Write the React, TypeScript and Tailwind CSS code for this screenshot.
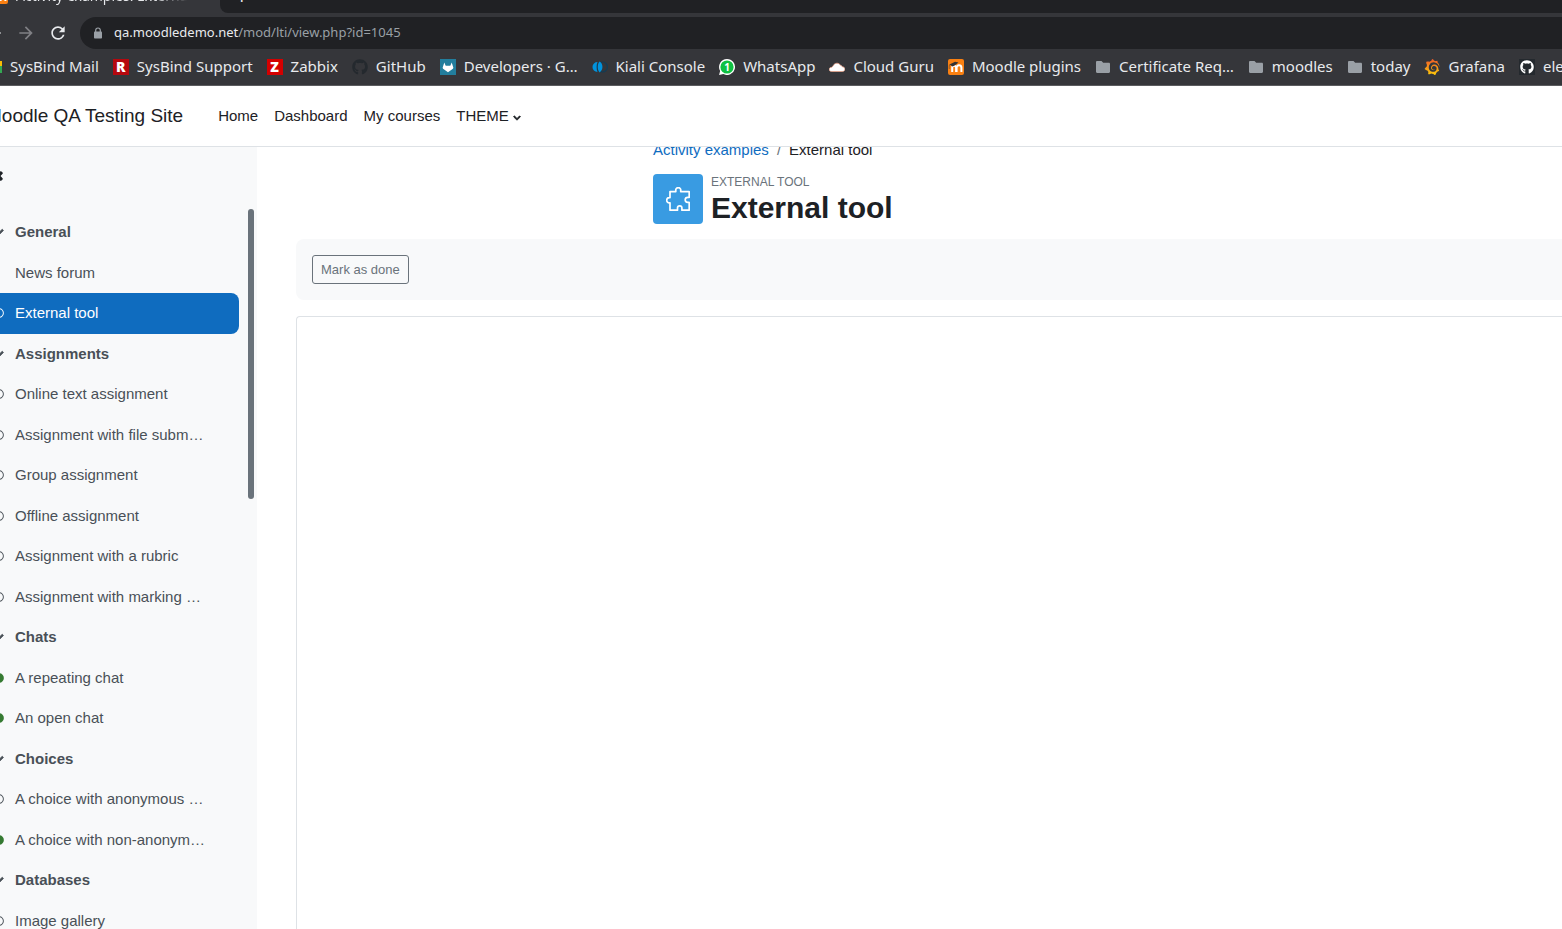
import type { ReactNode } from 'react'
import { FaChevronDown, FaCircle, FaGithub, FaRegCircle, FaTimes } from 'react-icons/fa'
import { MdArrowBack, MdArrowForward, MdRefresh } from 'react-icons/md'
import { SiGrafana } from 'react-icons/si'

type Status = 'none' | 'todo' | 'done'

interface Activity {
  name: string
  status: Status
  active?: boolean
}

interface Section {
  title: string
  items: Activity[]
}

const SECTIONS: Section[] = [
  {
    title: 'General',
    items: [
      { name: 'News forum', status: 'none' },
      { name: 'External tool', status: 'todo', active: true },
    ],
  },
  {
    title: 'Assignments',
    items: [
      { name: 'Online text assignment', status: 'todo' },
      { name: 'Assignment with file subm…', status: 'todo' },
      { name: 'Group assignment', status: 'todo' },
      { name: 'Offline assignment', status: 'todo' },
      { name: 'Assignment with a rubric', status: 'todo' },
      { name: 'Assignment with marking …', status: 'todo' },
    ],
  },
  {
    title: 'Chats',
    items: [
      { name: 'A repeating chat', status: 'done' },
      { name: 'An open chat', status: 'done' },
    ],
  },
  {
    title: 'Choices',
    items: [
      { name: 'A choice with anonymous …', status: 'todo' },
      { name: 'A choice with non-anonym…', status: 'done' },
    ],
  },
  {
    title: 'Databases',
    items: [{ name: 'Image gallery', status: 'todo' }],
  },
]

function MailIcon() {
  return (
    <svg viewBox="0 0 16 16" className="size-4">
      <path d="M0 2h16v12H0z" fill="#fff" />
      <path d="M0 2l8 6 8-6v3l-8 6-8-6z" fill="#ea4335" />
      <path d="M12 2h4v5h-4z" fill="#fbbc04" />
      <path d="M12 7h4v7h-4z" fill="#34a853" />
    </svg>
  )
}

function LetterIcon({ letter, className }: { letter: string; className: string }) {
  return (
    <span className={`flex size-4 items-center justify-center text-sm leading-4 font-black text-white ${className}`}>
      {letter}
    </span>
  )
}

function GitlabIcon() {
  return (
    <svg viewBox="0 0 16 16" className="size-4">
      <path d="M0 0h16v16H0z" fill="#227e9d" />
      <path d="M4.300 3.400L5.700 6.800h4.600l1.400-3.400 1.600 5.200c.1.4 0 .8-.4 1.100L8 13.200 3.100 9.700c-.4-.3-.5-.7-.4-1.100z" fill="#fff" />
    </svg>
  )
}

function KialiIcon() {
  return (
    <svg viewBox="0 0 16 16" className="size-4">
      <circle cx="10.400" cy="8" r="5" fill="none" stroke="#123c55" strokeWidth="1.200" />
      <path d="M5.500 3a5 5 0 1 0 0 10c-1.200-2.800-1.200-7.200 0-10z" fill="#0093dd" />
      <path d="M7.600 2.600c3.800 2.200 3.800 8.600 0 10.800-2.400-2.200-2.400-8.600 0-10.800z" fill="#0093dd" />
    </svg>
  )
}

function WhatsAppIcon() {
  return (
    <span className="relative flex size-4 items-center justify-center">
      <svg viewBox="0 0 16 16" className="absolute inset-0 size-4">
        <path d="M8 0a8 8 0 1 1-3.700 15.100L.1 16l1-4A8 8 0 0 1 8 0z" fill="#fff" />
        <circle cx="8" cy="8" r="6.600" fill="#0fc143" />
      </svg>
      <span className="relative text-[10px] leading-4 font-bold text-white">1</span>
    </span>
  )
}

function CloudIcon() {
  return (
    <svg viewBox="0 0 16 16" className="size-4">
      <path
        d="M2.500 12.500C1 12.500.2 11.600.2 10.500c0-1.300 1-2.200 2.400-2.200.5-.2.9-.7 1.400-1.300C4.800 5.200 6.300 4.200 8 4.200c1.500 0 2.700.8 3.400 2 .8 0 1.500.6 1.800 1.500 1.600.1 2.700 1 2.700 2.400 0 1.500-1 2.400-2.500 2.400z"
        fill="#fff"
        stroke="#f0a184"
        strokeWidth="0.7"
      />
    </svg>
  )
}

function MoodleIcon() {
  return (
    <svg viewBox="0 0 16 16" className="size-4">
      <rect width="16" height="16" rx="2" fill="#f98012" />
      <path d="M4.200 13V8.800a1.900 1.900 0 0 1 3.900-.2V13M8.600 13V8.800a2.400 2.400 0 0 1 4.800-.2V13" fill="none" stroke="#fff" strokeWidth="2" />
      <path d="M1.500 5.600L7 2.800l3.500.8-3.800 2.800-2.200 1z" fill="#333" />
      <path d="M1.500 5.600c-.4 2-.4 3-.2 4.400" fill="none" stroke="#333" strokeWidth="0.5" />
    </svg>
  )
}

function FolderIcon() {
  return (
    <svg viewBox="0 0 16 16" className="size-4 text-[#9aa0a6]">
      <path d="M2.200 2h4.300l1.700 1.700h5.600c.7 0 1.200.5 1.200 1.200v7.900c0 .7-.5 1.200-1.200 1.200H2.200C1.500 14 1 13.500 1 12.800V3.200C1 2.500 1.500 2 2.200 2z" fill="currentColor" />
    </svg>
  )
}

function LockIcon() {
  return (
    <svg viewBox="0 0 12 12" className="size-3 text-[#9aa0a6]">
      <path d="M3.700 5.500V3.300a2.300 2.300 0 0 1 4.600 0v2.200" fill="none" stroke="currentColor" strokeWidth="1.200" />
      <rect x="2" y="4.500" width="8" height="7" rx="0.8" fill="currentColor" />
    </svg>
  )
}

function GrafanaIcon() {
  return (
    <>
      <svg className="absolute size-0" aria-hidden="true">
        <linearGradient id="grafana" x1="0" y1="0" x2="0" y2="1">
          <stop offset="0" stopColor="#f05a28" />
          <stop offset="1" stopColor="#fbca0a" />
        </linearGradient>
      </svg>
      <SiGrafana className="size-4" fill="url(#grafana)" />
    </>
  )
}

const BOOKMARKS: { label: string; icon: ReactNode }[] = [
  { label: 'SysBind Mail', icon: <MailIcon /> },
  { label: 'SysBind Support', icon: <LetterIcon letter="R" className="bg-[#b5080e]" /> },
  { label: 'Zabbix', icon: <LetterIcon letter="Z" className="bg-[#d40000]" /> },
  { label: 'GitHub', icon: <FaGithub className="size-4 text-[#24292e]" /> },
  { label: 'Developers · G…', icon: <GitlabIcon /> },
  { label: 'Kiali Console', icon: <KialiIcon /> },
  { label: 'WhatsApp', icon: <WhatsAppIcon /> },
  { label: 'Cloud Guru', icon: <CloudIcon /> },
  { label: 'Moodle plugins', icon: <MoodleIcon /> },
  { label: 'Certificate Req…', icon: <FolderIcon /> },
  { label: 'moodles', icon: <FolderIcon /> },
  { label: 'today', icon: <FolderIcon /> },
  { label: 'Grafana', icon: <GrafanaIcon /> },
  { label: 'elearning', icon: <FaGithub className="size-4 bg-[#24292e] p-px text-white" /> },
]

function Browser() {
  return (
    <header className="shrink-0 border-b border-[#5b5c5f] bg-[#35363a] font-['Noto_Sans',sans-serif] text-[#e8eaed]">
      <div className="flex h-[13px]">
        <div className="flex w-[220px] shrink-0 items-start overflow-hidden">
          <div className="-mt-[14px] -ml-2 flex items-center gap-2 text-sm leading-5 whitespace-nowrap">
            <MoodleIcon />
            <span className="bg-linear-to-r from-[#e8eaed] from-80% to-transparent bg-clip-text text-transparent">
              Activity examples: Externa
            </span>
          </div>
        </div>
        <div className="flex-1 overflow-hidden rounded-bl-lg bg-[#202124] pl-4">
          <button aria-label="New tab" className="-mt-[13px] block text-xl leading-5">+</button>
        </div>
      </div>
      <div className="mt-1 flex h-8 items-center overflow-hidden">
        <button aria-label="Back" className="-ml-4 shrink-0"><MdArrowBack className="size-5" /></button>
        <button aria-label="Forward" className="ml-3 shrink-0 text-[#808185]"><MdArrowForward className="size-5" /></button>
        <button aria-label="Reload" className="ml-3 shrink-0"><MdRefresh className="size-5" /></button>
        <div className="ml-3 flex h-8 flex-1 items-center gap-[10px] rounded-l-full bg-[#202124] pl-3 text-[13px]">
          <LockIcon />
          <span className="text-[#9aa0a6]">
            <span className="text-[#e8eaed]">qa.moodledemo.net</span>/mod/lti/view.php?id=1045
          </span>
        </div>
      </div>
      <nav aria-label="Bookmarks" className="-ml-[14px] flex h-9 items-center gap-[14px] overflow-hidden pb-px text-[15px] whitespace-nowrap">
        {BOOKMARKS.map(b => (
          <a key={b.label} href="#" className="flex shrink-0 items-center gap-2">
            {b.icon}
            {b.label}
          </a>
        ))}
      </nav>
    </header>
  )
}

function Navbar() {
  return (
    <nav className="flex h-[61px] shrink-0 items-center border-b border-[#dee2e6] bg-white text-[#1d2125]">
      <a href="#" className="-ml-[14px] text-[19px] whitespace-nowrap">Moodle QA Testing Site</a>
      <div className="ml-[35px] flex items-center gap-4 whitespace-nowrap">
        <a href="#">Home</a>
        <a href="#">Dashboard</a>
        <a href="#">My courses</a>
        <button className="flex items-center gap-1">
          THEME
          <FaChevronDown className="mt-1 size-2 overflow-visible" strokeWidth={50} />
        </button>
      </div>
    </nav>
  )
}

function StatusIcon({ status }: { status: Status }) {
  if (status === 'done') return <FaCircle className="size-2.5 text-[#357a32]" />
  if (status === 'todo') return <FaRegCircle className="size-2.5" />
  return null
}

function CourseIndex() {
  return (
    <aside className="-ml-4 flex w-[273px] shrink-0 flex-col bg-[#f8f9fa] text-[#495057]">
      <div className="flex h-[62px] shrink-0 items-start pt-[23px] pl-2">
        <button aria-label="Close course index" className="text-[#1d2125]">
          <FaTimes className="size-3 overflow-visible" strokeWidth={50} />
        </button>
      </div>
      <div className="flex items-start">
        <nav aria-label="Course index" className="mr-[9px] flex-1 pt-[3px]">
          {SECTIONS.map(s => (
            <section key={s.title}>
              <h2 className="flex items-center py-[9px] font-bold">
                <button aria-label={`Collapse ${s.title}`} className="mr-[11px] flex w-5 justify-end">
                  <FaChevronDown className="size-2.5 overflow-visible" strokeWidth={50} />
                </button>
                <a href="#">{s.title}</a>
              </h2>
              <ul>
                {s.items.map(item => (
                  <li
                    key={item.name}
                    className={`flex items-center py-[9px] ${item.active ? 'rounded-lg bg-[#0f6cbf] text-white' : ''}`}
                  >
                    <span className="mr-[11px] flex w-5 justify-end">
                      <StatusIcon status={item.status} />
                    </span>
                    <a href="#" className="whitespace-nowrap">{item.name}</a>
                  </li>
                ))}
              </ul>
            </section>
          ))}
        </nav>
        {/* scrollbar thumb */}
        <div className="mr-[3px] h-[290px] w-1.5 rounded-full bg-[#6a737b]" />
      </div>
    </aside>
  )
}

function PuzzleIcon() {
  return (
    <svg viewBox="0 0 24 24" className="size-6" fill="none" stroke="#fff" strokeWidth="1.700" strokeLinejoin="round">
      <path d="M4 4.600h5.800V3.600a2.500 2.500 0 1 1 4.900 0v1h8.500v5.700h-1.500a2.500 2.500 0 1 0 0 5h1.500v7.900h-7.300v-2.100a2.200 2.200 0 1 0-4.400 0v2.100H4v-7.400H3.300a2.600 2.600 0 1 1 0-5.200H4z" />
    </svg>
  )
}

function Content() {
  return (
    <main className="ml-[39px] flex min-w-0 flex-1 flex-col overflow-hidden bg-white text-[#1d2125]">
      <div className="ml-[357px]">
        <nav aria-label="Breadcrumb" className="-mt-2 flex gap-2">
          <a href="#" className="text-[#0f6cbf]">Activity examples</a>
          <span className="text-[#6a737b]">/</span>
          <span>External tool</span>
        </nav>
        <div className="mt-3 flex h-[50px] items-start gap-2">
          <div className="flex size-[50px] items-center justify-center rounded bg-[#399be2]">
            <PuzzleIcon />
          </div>
          <div>
            <div className="text-xs leading-4 text-[#6a737b] uppercase">External tool</div>
            <h1 className="text-[30px] leading-9 font-bold">External tool</h1>
          </div>
        </div>
      </div>
      <div className="mt-[15px] rounded-l-lg bg-[#f8f9fa] p-4">
        <button className="block rounded-[3px] border border-[#6a737b] px-2 py-1 text-[13px] leading-[19px] text-[#6a737b]">
          Mark as done
        </button>
      </div>
      <div className="mt-4 flex-1 rounded-tl border-t border-l border-[#dee2e6]" />
    </main>
  )
}

export default function App() {
  return (
    <div className="flex h-screen flex-col overflow-hidden bg-white font-['Liberation_Sans',Arial,sans-serif] text-[15px] leading-normal">
      <Browser />
      <Navbar />
      <div className="flex min-h-0 flex-1 overflow-hidden">
        <CourseIndex />
        <Content />
      </div>
    </div>
  )
}
